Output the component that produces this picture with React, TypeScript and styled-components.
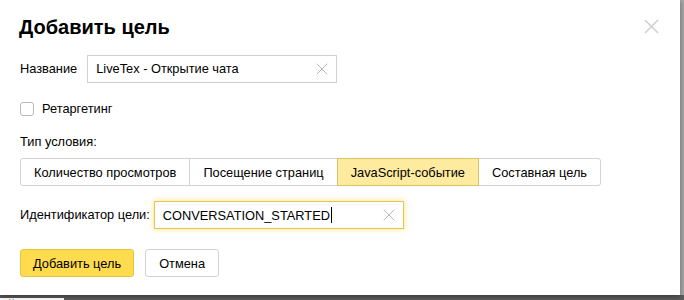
import React from 'react'
import styled, { createGlobalStyle } from 'styled-components'

const GlobalStyle = createGlobalStyle`
  html, body {
    margin: 0;
    padding: 0;
    background: #a2a2a2;
    font-family: 'Liberation Sans', Arial, sans-serif;
    color: #000;
  }
`

const BASE = '12.8px'

const Page = styled.div`
  width: 684px;
  height: 300px;
  overflow: hidden;
  background: #a2a2a2;
`

const Modal = styled.div`
  position: relative;
  z-index: 1;
  box-sizing: border-box;
  width: 680px;
  height: 295px;
  padding: 15px 20px 0 20px;
  background: #fff;
  box-shadow: 0 2px 4px rgba(0, 0, 0, 0.35);
  display: flex;
  flex-direction: column;
  font-size: ${BASE};
`

const Title = styled.h2`
  margin: 0 0 0 -1px;
  font-size: 20px;
  line-height: 24px;
  font-weight: bold;
`

const CloseButton = styled.button`
  position: absolute;
  top: 18px;
  right: 21px;
  width: 16px;
  height: 16px;
  padding: 0;
  border: 0;
  background: none;
  display: flex;
  align-items: center;
  justify-content: center;
`

const Row = styled.div<{ $top: number }>`
  display: flex;
  align-items: center;
  margin-top: ${(p) => p.$top}px;
`

const Label = styled.label<{ $gap: number }>`
  margin-right: ${(p) => p.$gap}px;
  font-size: ${BASE};
  line-height: 16px;
  color: #000;
`

const Field = styled.div<{ $focused?: boolean }>`
  box-sizing: border-box;
  width: 250px;
  height: 28px;
  display: flex;
  align-items: center;
  padding: 0 8px 0 8px;
  border: 1px solid ${(p) => (p.$focused ? '#e3c45c' : '#d0d0d0')};
  box-shadow: ${(p) => (p.$focused ? '0 0 6px rgba(255, 204, 0, 0.55)' : 'none')};
  background: #fff;
`

const FieldText = styled.span`
  flex: 1;
  font-size: ${BASE};
  line-height: 16px;
  white-space: nowrap;
  color: #000;
`

const Caret = styled.span`
  display: inline-block;
  width: 1px;
  height: 16px;
  margin-left: 1px;
  vertical-align: -3px;
  background: #000;
`

const ClearIcon = styled.span`
  display: flex;
  width: 12px;
  height: 12px;
`

const Checkbox = styled.span`
  box-sizing: border-box;
  width: 14px;
  height: 14px;
  border: 1px solid #b8b8b8;
  border-radius: 3px;
  margin-right: 8px;
`

const Segments = styled.div`
  display: flex;
  margin-top: 8px;
  align-self: flex-start;
`

const Segment = styled.button<{ $active?: boolean }>`
  box-sizing: border-box;
  height: 28px;
  padding: 0 13px;
  margin-left: -1px;
  font-family: inherit;
  font-size: ${BASE};
  color: #000;
  border: 1px solid ${(p) => (p.$active ? '#dcc366' : '#d3d3d3')};
  background: ${(p) => (p.$active ? '#ffeba0' : '#fff')};
  position: relative;
  z-index: ${(p) => (p.$active ? 1 : 0)};

  &:first-child {
    margin-left: 0;
    border-radius: 3px 0 0 3px;
  }
  &:last-child {
    border-radius: 0 3px 3px 0;
  }
`

const Actions = styled.div`
  display: flex;
  gap: 11px;
  margin-top: 20px;
`

const Button = styled.button<{ $primary?: boolean }>`
  box-sizing: border-box;
  height: 28px;
  padding: 0 ${(p) => (p.$primary ? 12 : 13)}px;
  font-family: inherit;
  font-size: ${BASE};
  color: #000;
  border-radius: 3px;
  border: 1px solid ${(p) => (p.$primary ? '#e8c43c' : '#d3d3d3')};
  background: ${(p) => (p.$primary ? '#ffdb4d' : '#fff')};
`

const BehindRow = styled.div`
  height: 5px;
  overflow: visible;
  background: #5b5b5b;
`

const BehindText = styled.span`
  display: inline-block;
  margin-left: -7px;
  padding-right: 6px;
  font-size: 13px;
  line-height: 13px;
  margin-top: 1px;
  background: #fff;
  color: #222;
`

const Cross = ({ size, color, width }: { size: number; color: string; width: number }) => (
  <svg width={size} height={size} viewBox="0 0 16 16">
    <path d="M1 1L15 15M15 1L1 15" stroke={color} strokeWidth={width} fill="none" />
  </svg>
)

export default function App() {
  return (
    <Page>
      <GlobalStyle />
      <Modal>
        <Title>Добавить цель</Title>
        <CloseButton aria-label="Закрыть">
          <Cross size={15} color="#cfcfcf" width={1.6} />
        </CloseButton>

        <Row $top={16}>
          <Label $gap={10}>Название</Label>
          <Field>
            <FieldText>LiveTex - Открытие чата</FieldText>
            <ClearIcon>
              <Cross size={12} color="#a8a8a8" width={1.1} />
            </ClearIcon>
          </Field>
        </Row>

        <Row $top={18}>
          <Checkbox />
          <Label $gap={0}>Ретаргетинг</Label>
        </Row>

        <Row $top={17}>
          <Label $gap={0}>Тип условия:</Label>
        </Row>

        <Segments>
          <Segment>Количество просмотров</Segment>
          <Segment>Посещение страниц</Segment>
          <Segment $active>JavaScript-событие</Segment>
          <Segment>Составная цель</Segment>
        </Segments>

        <Row $top={15}>
          <Label $gap={4}>Идентификатор цели:</Label>
          <Field $focused>
            <FieldText>
              CONVERSATION_STARTED
              <Caret />
            </FieldText>
            <ClearIcon>
              <Cross size={12} color="#a8a8a8" width={1.1} />
            </ClearIcon>
          </Field>
        </Row>

        <Actions>
          <Button $primary>Добавить цель</Button>
          <Button>Отмена</Button>
        </Actions>
      </Modal>
      <BehindRow>
        <BehindText>действием</BehindText>
      </BehindRow>
    </Page>
  )
}
